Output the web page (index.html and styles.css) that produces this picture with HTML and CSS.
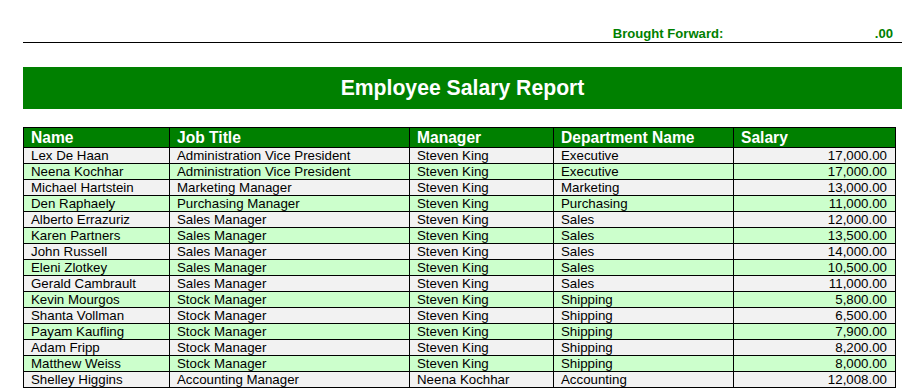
FILE: index.html
```html
<!DOCTYPE html>
<html lang="en">
<head>
<meta charset="utf-8">
<title>Employee Salary Report</title>
<link rel="stylesheet" href="styles.css">
</head>
<body>
<div class="page">
  <div class="bf">
    <span class="bf-label">Brought Forward:</span>
    <span class="bf-value">.00</span>
  </div>
  <div class="banner">Employee Salary Report</div>
  <table class="report">
    <colgroup>
      <col class="c-name">
      <col class="c-job">
      <col class="c-mgr">
      <col class="c-dept">
      <col class="c-sal">
    </colgroup>
    <thead>
      <tr><th>Name</th><th>Job Title</th><th>Manager</th><th>Department Name</th><th>Salary</th></tr>
    </thead>
    <tbody>
      <tr><td>Lex De Haan</td><td>Administration Vice President</td><td>Steven King</td><td>Executive</td><td class="num">17,000.00</td></tr>
      <tr><td>Neena Kochhar</td><td>Administration Vice President</td><td>Steven King</td><td>Executive</td><td class="num">17,000.00</td></tr>
      <tr><td>Michael Hartstein</td><td>Marketing Manager</td><td>Steven King</td><td>Marketing</td><td class="num">13,000.00</td></tr>
      <tr><td>Den Raphaely</td><td>Purchasing Manager</td><td>Steven King</td><td>Purchasing</td><td class="num">11,000.00</td></tr>
      <tr><td>Alberto Errazuriz</td><td>Sales Manager</td><td>Steven King</td><td>Sales</td><td class="num">12,000.00</td></tr>
      <tr><td>Karen Partners</td><td>Sales Manager</td><td>Steven King</td><td>Sales</td><td class="num">13,500.00</td></tr>
      <tr><td>John Russell</td><td>Sales Manager</td><td>Steven King</td><td>Sales</td><td class="num">14,000.00</td></tr>
      <tr><td>Eleni Zlotkey</td><td>Sales Manager</td><td>Steven King</td><td>Sales</td><td class="num">10,500.00</td></tr>
      <tr><td>Gerald Cambrault</td><td>Sales Manager</td><td>Steven King</td><td>Sales</td><td class="num">11,000.00</td></tr>
      <tr><td>Kevin Mourgos</td><td>Stock Manager</td><td>Steven King</td><td>Shipping</td><td class="num">5,800.00</td></tr>
      <tr><td>Shanta Vollman</td><td>Stock Manager</td><td>Steven King</td><td>Shipping</td><td class="num">6,500.00</td></tr>
      <tr><td>Payam Kaufling</td><td>Stock Manager</td><td>Steven King</td><td>Shipping</td><td class="num">7,900.00</td></tr>
      <tr><td>Adam Fripp</td><td>Stock Manager</td><td>Steven King</td><td>Shipping</td><td class="num">8,200.00</td></tr>
      <tr><td>Matthew Weiss</td><td>Stock Manager</td><td>Steven King</td><td>Shipping</td><td class="num">8,000.00</td></tr>
      <tr><td>Shelley Higgins</td><td>Accounting Manager</td><td>Neena Kochhar</td><td>Accounting</td><td class="num">12,008.00</td></tr>
    </tbody>
  </table>
</div>
</body>
</html>
```
FILE: styles.css
```css
html, body {
  margin: 0;
  padding: 0;
  background: #ffffff;
}

body {
  font-family: "Liberation Sans", Arial, sans-serif;
  color: #000000;
}

.page {
  margin-left: 23px;
  width: 879px;
}

.bf {
  height: 43px;
  border-bottom: 1px solid #000000;
  display: flex;
  justify-content: flex-end;
  align-items: flex-end;
  color: #008000;
  font-weight: bold;
  font-size: 13.1px;
  line-height: 15px;
  padding-bottom: 1px;
  box-sizing: border-box;
}

.bf-label {
  width: 262px;
}

.bf-value {
  padding-right: 9px;
}

.banner {
  margin-top: 24px;
  height: 42px;
  background: #008000;
  color: #ffffff;
  font-weight: bold;
  font-size: 21.2px;
  display: flex;
  align-items: center;
  justify-content: center;
}

.report {
  margin-top: 18px;
  width: 873px;
  border-collapse: separate;
  border-spacing: 0;
  border-top: 1px solid #000000;
  border-left: 1px solid #000000;
  table-layout: fixed;
  box-sizing: border-box;
}

.c-name { width: 146px; }
.c-job { width: 240px; }
.c-mgr { width: 144px; }
.c-dept { width: 180px; }
.c-sal { width: 162px; }

.report th,
.report td {
  border-right: 1px solid #000000;
  border-bottom: 1px solid #000000;
  padding: 0 8px 0 7px;
  text-align: left;
  white-space: nowrap;
  overflow: hidden;
}

.report th {
  background: #008000;
  color: #ffffff;
  font-size: 15.6px;
  font-weight: bold;
  height: 19px;
  line-height: 19px;
}

.report td {
  font-size: 13.3px;
  height: 15px;
  line-height: 15px;
}

.report tbody tr:nth-child(odd) td {
  background: #f2f2f2;
}

.report tbody tr:nth-child(even) td {
  background: #ccffcc;
}

.report td.num {
  text-align: right;
}
```
